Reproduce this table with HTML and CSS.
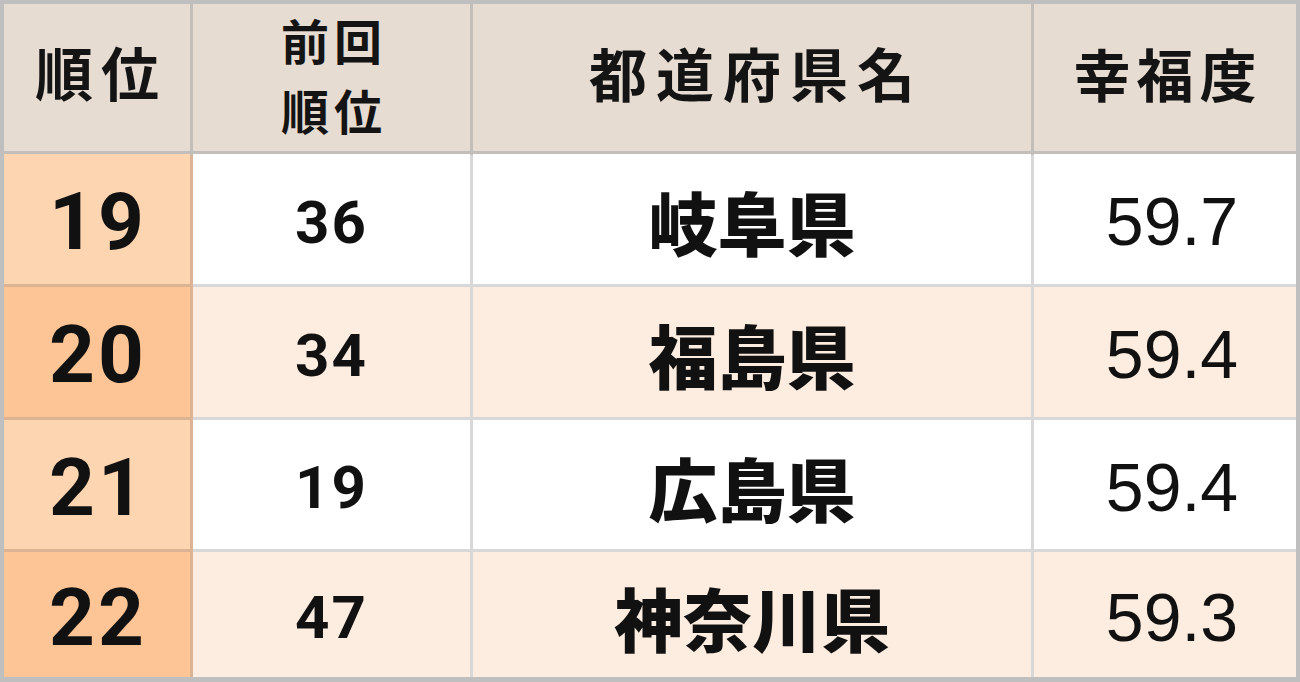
FILE: index.html
```html
<!DOCTYPE html>
<html lang="ja">
<head>
<meta charset="utf-8">
<title>幸福度ランキング</title>
<link rel="stylesheet" href="styles.css">
</head>
<body>
<div class="table">
  <div class="cell head h-rank">順位</div>
  <div class="cell head h-prev"><span class="line">前回</span><span class="line">順位</span></div>
  <div class="cell head h-pref">都道府県名</div>
  <div class="cell head h-score">幸福度</div>

  <div class="cell rank odd">19</div>
  <div class="cell prev odd">36</div>
  <div class="cell pref odd">岐阜県</div>
  <div class="cell score odd">59.7</div>

  <div class="cell rank even">20</div>
  <div class="cell prev even">34</div>
  <div class="cell pref even">福島県</div>
  <div class="cell score even">59.4</div>

  <div class="cell rank odd">21</div>
  <div class="cell prev odd">19</div>
  <div class="cell pref odd">広島県</div>
  <div class="cell score odd">59.4</div>

  <div class="cell rank even">22</div>
  <div class="cell prev even">47</div>
  <div class="cell pref even">神奈川県</div>
  <div class="cell score even">59.3</div>
</div>
</body>
</html>
```

FILE: styles.css
```css
html, body {
  margin: 0;
  padding: 0;
  background: #ffffff;
}

.table {
  box-sizing: border-box;
  width: 1300px;
  height: 682px;
  display: grid;
  grid-template-columns: 186px 277px 558px 262px;
  grid-template-rows: 147px 130px 130px 129px 125px;
  gap: 3px;
  border-style: solid;
  border-color: #bfbfbf;
  border-width: 4px 4px 5px 4px;
  background:
    linear-gradient(#c2bfbb, #c2bfbb) left top / 100% 151px no-repeat,
    linear-gradient(#dcb394, #dcb394) left top / 189px 100% no-repeat,
    #d8d8d8;
  color: #111111;
}

.cell {
  display: flex;
  align-items: center;
  justify-content: center;
  text-align: center;
}

.head {
  background: #e7dcd2;
  font-family: "Noto Sans CJK JP", "Noto Sans", sans-serif;
  font-weight: 700;
  color: #141414;
}

.h-rank {
  font-size: 58px;
  letter-spacing: 8px;
  padding-bottom: 14px;
  padding-left: 8px;
}

.h-prev {
  flex-direction: column;
  font-size: 48px;
  letter-spacing: 5px;
  padding-left: 5px;
  padding-bottom: 7px;
}

.h-prev .line {
  display: block;
  flex: none;
  height: 70px;
  line-height: 70px;
}

.h-pref {
  font-size: 58px;
  letter-spacing: 9px;
  padding-bottom: 12px;
  padding-left: 9px;
}

.h-score {
  font-size: 57px;
  letter-spacing: 6px;
  padding-bottom: 12px;
  padding-left: 6px;
}

.odd { background: #ffffff; }
.even { background: #fdede0; }

.rank.odd { background: #fed5b1; }
.rank.even { background: #fdc595; }

.rank {
  font-family: Roboto, "Liberation Sans", sans-serif;
  font-weight: 700;
  font-size: 80px;
  letter-spacing: 3px;
  padding-left: 2px;
  padding-top: 6px;
}

.prev {
  font-family: Roboto, "Liberation Sans", sans-serif;
  font-weight: 700;
  font-size: 60px;
  letter-spacing: 2px;
  padding-top: 6px;
}

.pref {
  font-family: "Noto Sans CJK JP", "Noto Sans", sans-serif;
  font-weight: 900;
  font-size: 69px;
  padding-top: 4px;
}

.score {
  font-family: "Liberation Sans", Arial, sans-serif;
  font-weight: 400;
  font-size: 68px;
  padding-left: 14px;
  padding-top: 4px;
}
```
